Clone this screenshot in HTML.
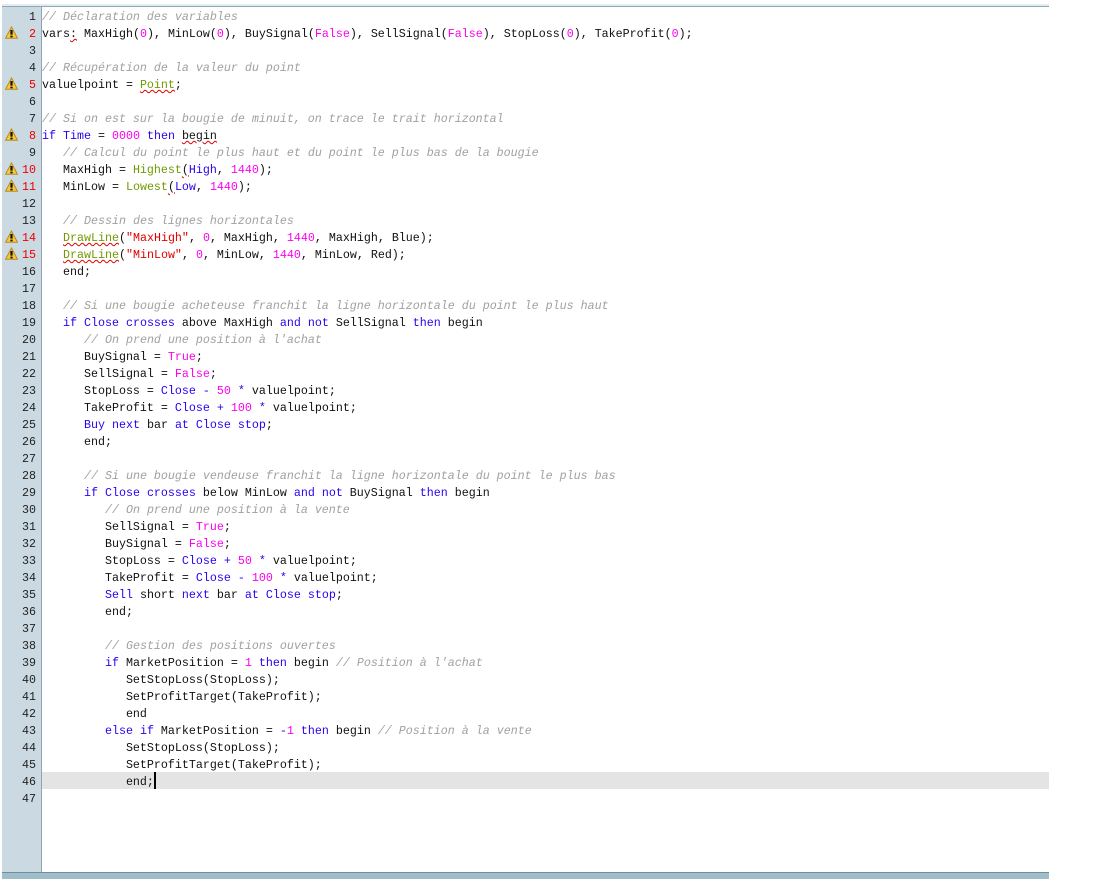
<!DOCTYPE html>
<html><head><meta charset="utf-8"><style>
html,body{margin:0;padding:0;background:#fff;width:1105px;height:879px;overflow:hidden}
#top1{position:absolute;left:2px;top:4px;width:1047px;height:2px;background:#e3ebf0}
#top2{position:absolute;left:2px;top:6px;width:1047px;height:1px;background:#8fa8b5}
#gut{position:absolute;left:2px;top:7px;width:39px;height:865px;background:#cbdae2}
#gl{position:absolute;left:41px;top:7px;width:1px;height:865px;background:#8fa6b0}
#b1{position:absolute;left:2px;top:872px;width:1047px;height:1px;background:#6f8f9f}
#b2{position:absolute;left:2px;top:873px;width:1047px;height:6px;background:#a0bdca}
#hl{position:absolute;left:42px;top:772px;width:1007px;height:17px;background:#e4e4e4}
#cur{position:absolute;left:154px;top:772px;width:2px;height:17px;background:#000}
#nums,#code{position:absolute;top:9px;font:11.667px/17px "Liberation Mono",monospace;white-space:pre;color:#101010}
#nums{left:2px;width:34px;text-align:right;color:#222}
#code{left:42px}
.r{color:#f00000}
.k{color:#2a00f0}
.c{color:#a0a0a0;font-style:italic}
.n{color:#ff00ee}
.s{color:#e00000}
.f{color:#6f9a00}
.w{text-decoration:underline wavy #e00000 1px;text-underline-offset:1px}
svg{position:absolute;left:5px;width:13px;height:13px}
</style></head><body>
<div id="top1"></div><div id="top2"></div><div id="gut"></div><div id="gl"></div><div id="b1"></div><div id="b2"></div>
<div id="hl"></div><div id="cur"></div>
<svg viewBox="0 0 13 13" style="top:26px"><path d="M6.5 1 12.5 12.3H.5z" fill="#f5c93c" stroke="#bd8a1e"/><path d="M6.5 4V8.6M6.5 9.6V11.4" stroke="#111" stroke-width="2.2"/></svg>
<svg viewBox="0 0 13 13" style="top:77px"><path d="M6.5 1 12.5 12.3H.5z" fill="#f5c93c" stroke="#bd8a1e"/><path d="M6.5 4V8.6M6.5 9.6V11.4" stroke="#111" stroke-width="2.2"/></svg>
<svg viewBox="0 0 13 13" style="top:128px"><path d="M6.5 1 12.5 12.3H.5z" fill="#f5c93c" stroke="#bd8a1e"/><path d="M6.5 4V8.6M6.5 9.6V11.4" stroke="#111" stroke-width="2.2"/></svg>
<svg viewBox="0 0 13 13" style="top:162px"><path d="M6.5 1 12.5 12.3H.5z" fill="#f5c93c" stroke="#bd8a1e"/><path d="M6.5 4V8.6M6.5 9.6V11.4" stroke="#111" stroke-width="2.2"/></svg>
<svg viewBox="0 0 13 13" style="top:179px"><path d="M6.5 1 12.5 12.3H.5z" fill="#f5c93c" stroke="#bd8a1e"/><path d="M6.5 4V8.6M6.5 9.6V11.4" stroke="#111" stroke-width="2.2"/></svg>
<svg viewBox="0 0 13 13" style="top:230px"><path d="M6.5 1 12.5 12.3H.5z" fill="#f5c93c" stroke="#bd8a1e"/><path d="M6.5 4V8.6M6.5 9.6V11.4" stroke="#111" stroke-width="2.2"/></svg>
<svg viewBox="0 0 13 13" style="top:247px"><path d="M6.5 1 12.5 12.3H.5z" fill="#f5c93c" stroke="#bd8a1e"/><path d="M6.5 4V8.6M6.5 9.6V11.4" stroke="#111" stroke-width="2.2"/></svg>
<div id="nums">1
<span class="r">2</span>
3
4
<span class="r">5</span>
6
7
<span class="r">8</span>
9
<span class="r">10</span>
<span class="r">11</span>
12
13
<span class="r">14</span>
<span class="r">15</span>
16
17
18
19
20
21
22
23
24
25
26
27
28
29
30
31
32
33
34
35
36
37
38
39
40
41
42
43
44
45
46
47</div>
<div id="code"><span class="c">// Déclaration des variables</span>
vars<span class="w">:</span> MaxHigh(<span class="n">0</span>), MinLow(<span class="n">0</span>), BuySignal(<span class="n">False</span>), SellSignal(<span class="n">False</span>), StopLoss(<span class="n">0</span>), TakeProfit(<span class="n">0</span>);

<span class="c">// Récupération de la valeur du point</span>
valuelpoint = <span class="f w">Point</span>;

<span class="c">// Si on est sur la bougie de minuit, on trace le trait horizontal</span>
<span class="k">if Time</span> = <span class="n">0000</span> <span class="k">then</span> <span class="w">begin</span>
   <span class="c">// Calcul du point le plus haut et du point le plus bas de la bougie</span>
   MaxHigh = <span class="f">Highest</span><span class="w">(</span><span class="k">High</span>, <span class="n">1440</span>);
   MinLow = <span class="f">Lowest</span><span class="w">(</span><span class="k">Low</span>, <span class="n">1440</span>);

   <span class="c">// Dessin des lignes horizontales</span>
   <span class="f w">DrawLine</span>(<span class="s">"MaxHigh"</span>, <span class="n">0</span>, MaxHigh, <span class="n">1440</span>, MaxHigh, Blue);
   <span class="f w">DrawLine</span>(<span class="s">"MinLow"</span>, <span class="n">0</span>, MinLow, <span class="n">1440</span>, MinLow, Red);
   end;

   <span class="c">// Si une bougie acheteuse franchit la ligne horizontale du point le plus haut</span>
   <span class="k">if Close crosses</span> above MaxHigh <span class="k">and not</span> SellSignal <span class="k">then</span> begin
      <span class="c">// On prend une position à l'achat</span>
      BuySignal = <span class="n">True</span>;
      SellSignal = <span class="n">False</span>;
      StopLoss = <span class="k">Close - </span><span class="n">50</span> <span class="k">*</span> valuelpoint;
      TakeProfit = <span class="k">Close + </span><span class="n">100</span> <span class="k">*</span> valuelpoint;
      <span class="k">Buy next</span> bar <span class="k">at Close stop</span>;
      end;

      <span class="c">// Si une bougie vendeuse franchit la ligne horizontale du point le plus bas</span>
      <span class="k">if Close crosses</span> below MinLow <span class="k">and not</span> BuySignal <span class="k">then</span> begin
         <span class="c">// On prend une position à la vente</span>
         SellSignal = <span class="n">True</span>;
         BuySignal = <span class="n">False</span>;
         StopLoss = <span class="k">Close + </span><span class="n">50</span> <span class="k">*</span> valuelpoint;
         TakeProfit = <span class="k">Close - </span><span class="n">100</span> <span class="k">*</span> valuelpoint;
         <span class="k">Sell</span> short <span class="k">next</span> bar <span class="k">at Close stop</span>;
         end;

         <span class="c">// Gestion des positions ouvertes</span>
         <span class="k">if</span> MarketPosition = <span class="n">1</span> <span class="k">then</span> begin <span class="c">// Position à l'achat</span>
            SetStopLoss(StopLoss);
            SetProfitTarget(TakeProfit);
            end
         <span class="k">else if</span> MarketPosition = <span class="k">-</span><span class="n">1</span> <span class="k">then</span> begin <span class="c">// Position à la vente</span>
            SetStopLoss(StopLoss);
            SetProfitTarget(TakeProfit);
            end;
</div>
</body></html>
